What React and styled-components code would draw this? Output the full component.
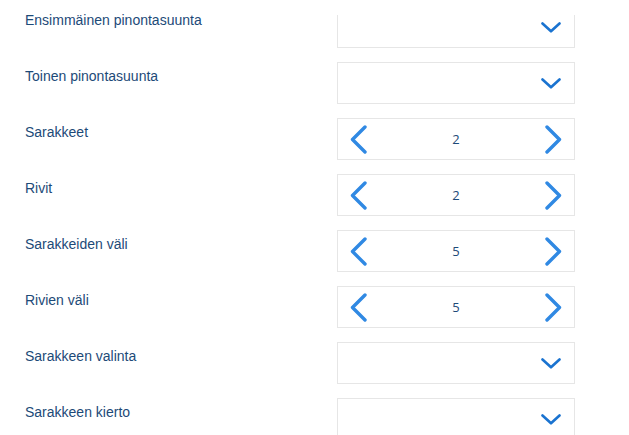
import React from 'react'
import styled, {createGlobalStyle} from 'styled-components'

const GlobalStyle = createGlobalStyle`
  html, body {
    margin: 0;
    padding: 0;
    background: #fff;
    overflow: hidden;
  }
  body {
    font-family: "Liberation Sans", Arial, sans-serif;
  }
`

const fields = [
  {label: 'Ensimmäinen pinontasuunta', type: 'select'},
  {label: 'Toinen pinontasuunta', type: 'select'},
  {label: 'Sarakkeet', type: 'stepper', value: 2},
  {label: 'Rivit', type: 'stepper', value: 2},
  {label: 'Sarakkeiden väli', type: 'stepper', value: 5},
  {label: 'Rivien väli', type: 'stepper', value: 5},
  {label: 'Sarakkeen valinta', type: 'select'},
  {label: 'Sarakkeen kierto', type: 'select'},
]

const DownIcon = () => (
  <svg width="20" height="11" viewBox="0 0 20 11" fill="none">
    <polyline points="1.5,1.5 10,9.3 18.5,1.5" stroke="#1a73d0" strokeWidth="2.6" strokeLinecap="round" strokeLinejoin="round" />
  </svg>
)

const ArrowIcon = ({dir}) => (
  <svg width="17" height="29" viewBox="0 0 17 29" fill="none">
    <polyline
      points={dir === 'left' ? '15,2 2.5,14.5 15,27' : '2,2 14.5,14.5 2,27'}
      stroke="#3089e3"
      strokeWidth="3.4"
      strokeLinecap="round"
      strokeLinejoin="round"
    />
  </svg>
)

const App = () => {
  return (
    <>
      <GlobalStyle />
      <Form>
        {fields.map((f, i) => (
          <Row key={f.label}>
            <Label>{f.label}</Label>
            {f.type === 'select' ? (
              <SelectBox $clip={i === 0}>
                <DownIcon />
              </SelectBox>
            ) : (
              <StepperBox>
                <StepButton><ArrowIcon dir="left" /></StepButton>
                <Value>{f.value}</Value>
                <StepButton><ArrowIcon dir="right" /></StepButton>
              </StepperBox>
            )}
          </Row>
        ))}
      </Form>
    </>
  )
}

export default App

const Form = styled.div`
  padding: 6px 0 0 25px;
  display: flex;
  flex-direction: column;
  gap: 14px;
`

const Row = styled.div`
  display: grid;
  grid-template-columns: 312px 238px;
  align-items: start;
`

const Label = styled.div`
  padding-top: 6px;
  font-size: 14px;
  line-height: 16px;
  color: #1d4a78;
`

const Box = styled.div`
  box-sizing: border-box;
  height: 42px;
  border: 1px solid #e6e6e6;
  background: #fff;
  display: flex;
  align-items: center;
`

const SelectBox = styled(Box)`
  justify-content: flex-end;
  padding-right: 13px;
  padding-top: 1px;
  clip-path: ${p => (p.$clip ? 'inset(9px 0 0 0)' : 'none')};
`

const StepperBox = styled(Box)`
  justify-content: space-between;
  padding: 0 12px;
`

const StepButton = styled.div`
  display: flex;
  align-items: center;
  padding-top: 1px;
`

const Value = styled.span`
  font-family: "Open Sans", "Liberation Sans", sans-serif;
  font-size: 13px;
  color: #1d4a78;
`
